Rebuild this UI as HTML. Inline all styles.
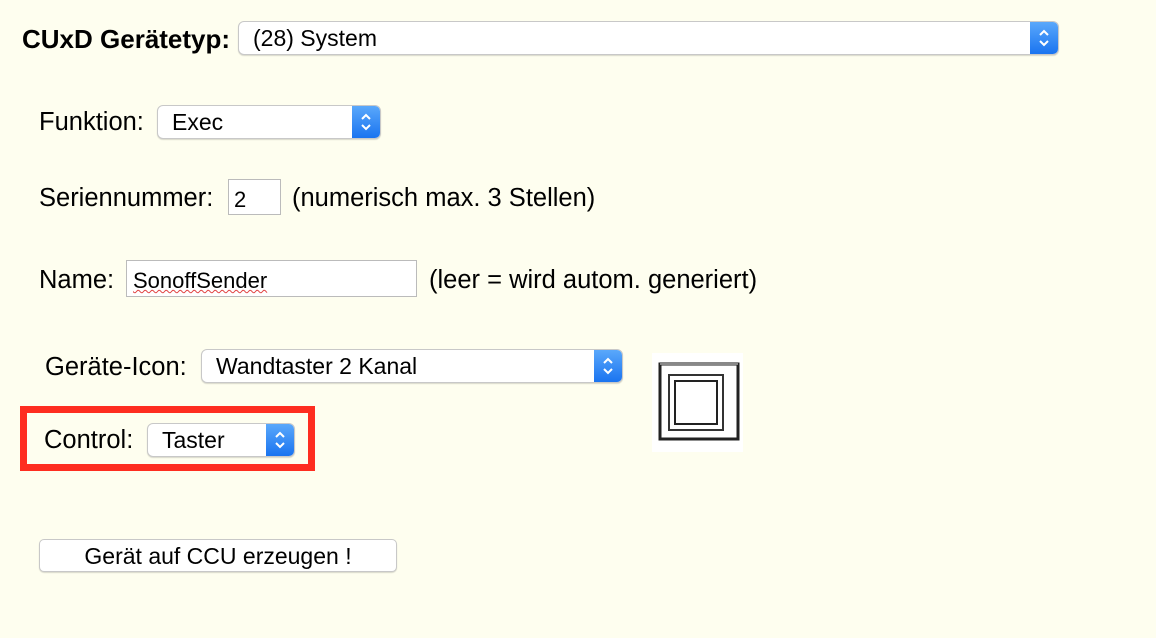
<!DOCTYPE html>
<html><head><meta charset="utf-8"><style>
body{margin:0;width:1156px;height:638px;background:#fefeef;font-family:"Liberation Sans",sans-serif;color:#000;position:relative;overflow:hidden}
.a{position:absolute;white-space:nowrap}
.lbl{font-size:25.5px}
.sel{position:absolute;background:#fff;border:1px solid #c8c8c8;border-radius:6px;box-shadow:0 1px 1px rgba(0,0,0,.15);font-size:23px;box-sizing:border-box;overflow:hidden}
.sel span{position:absolute;left:14px;top:50%;transform:translateY(-48%)}
.arr{position:absolute;right:0;top:0;bottom:0;width:28px;background:linear-gradient(#5aa8fb,#1a74f0);display:flex;align-items:center;justify-content:center}
.inp{position:absolute;background:#fff;border:1px solid #bbb;box-sizing:border-box;font-size:22px}
</style></head><body>
<div class="a" style="left:22px;top:24px;font-size:26px;font-weight:bold">CUxD Gerätetyp:</div>
<div class="sel" style="left:238px;top:21px;width:821px;height:34px"><span>(28) System</span><div class="arr"><svg width="14" height="22" viewBox="0 0 14 22"><path d="M3 8 L7 4 L11 8 M3 14 L7 18 L11 14" stroke="#fff" stroke-width="2" fill="none"/></svg></div></div>

<div class="a lbl" style="left:39px;top:108px">Funktion:</div>
<div class="sel" style="left:157px;top:105px;width:224px;height:34px"><span>Exec</span><div class="arr"><svg width="14" height="22" viewBox="0 0 14 22"><path d="M3 8 L7 4 L11 8 M3 14 L7 18 L11 14" stroke="#fff" stroke-width="2" fill="none"/></svg></div></div>

<div class="a lbl" style="left:39px;top:184px">Seriennummer:</div>
<div class="inp" style="left:228px;top:179px;width:53px;height:36px"><span class="a" style="left:5px;top:7px">2</span></div>
<div class="a lbl" style="left:292px;top:184px">(numerisch max. 3 Stellen)</div>

<div class="a lbl" style="left:39px;top:266px">Name:</div>
<div class="inp" style="left:126px;top:260px;width:291px;height:37px"><span class="a" style="left:6px;top:7px;text-decoration:underline wavy #e04040;text-decoration-thickness:1px">SonoffSender</span></div>
<div class="a lbl" style="left:429px;top:266px">(leer = wird autom. generiert)</div>

<div class="a lbl" style="left:45px;top:353px">Geräte-Icon:</div>
<div class="sel" style="left:201px;top:349px;width:422px;height:34px"><span>Wandtaster 2 Kanal</span><div class="arr"><svg width="14" height="22" viewBox="0 0 14 22"><path d="M3 8 L7 4 L11 8 M3 14 L7 18 L11 14" stroke="#fff" stroke-width="2" fill="none"/></svg></div></div>

<div class="a" style="left:652px;top:353px;width:91px;height:99px;background:#fff"></div>
<svg class="a" style="left:652px;top:353px" width="91" height="99" viewBox="0 0 91 99">
<rect x="8" y="11" width="78" height="75" fill="none" stroke="#222" stroke-width="3"/>
<rect x="8" y="9" width="78" height="3" fill="#888"/>
<rect x="17" y="22" width="54" height="55" fill="none" stroke="#333" stroke-width="2"/>
<rect x="23" y="28" width="42" height="43" fill="none" stroke="#222" stroke-width="2"/>
</svg>

<div class="a" style="left:20px;top:406px;width:295px;height:65px;box-sizing:border-box;border:7px solid #fe2d20"></div>
<div class="a lbl" style="left:44px;top:426px">Control:</div>
<div class="sel" style="left:147px;top:423px;width:148px;height:34px"><span>Taster</span><div class="arr"><svg width="14" height="22" viewBox="0 0 14 22"><path d="M3 8 L7 4 L11 8 M3 14 L7 18 L11 14" stroke="#fff" stroke-width="2" fill="none"/></svg></div></div>

<div class="a" style="left:39px;top:539px;width:358px;height:33px;background:#fff;border:1px solid #c8c8c8;border-radius:5px;box-sizing:border-box;box-shadow:0 1px 1px rgba(0,0,0,.15);font-size:23px;text-align:center;line-height:32px">Gerät auf CCU erzeugen !</div>
</body></html>
